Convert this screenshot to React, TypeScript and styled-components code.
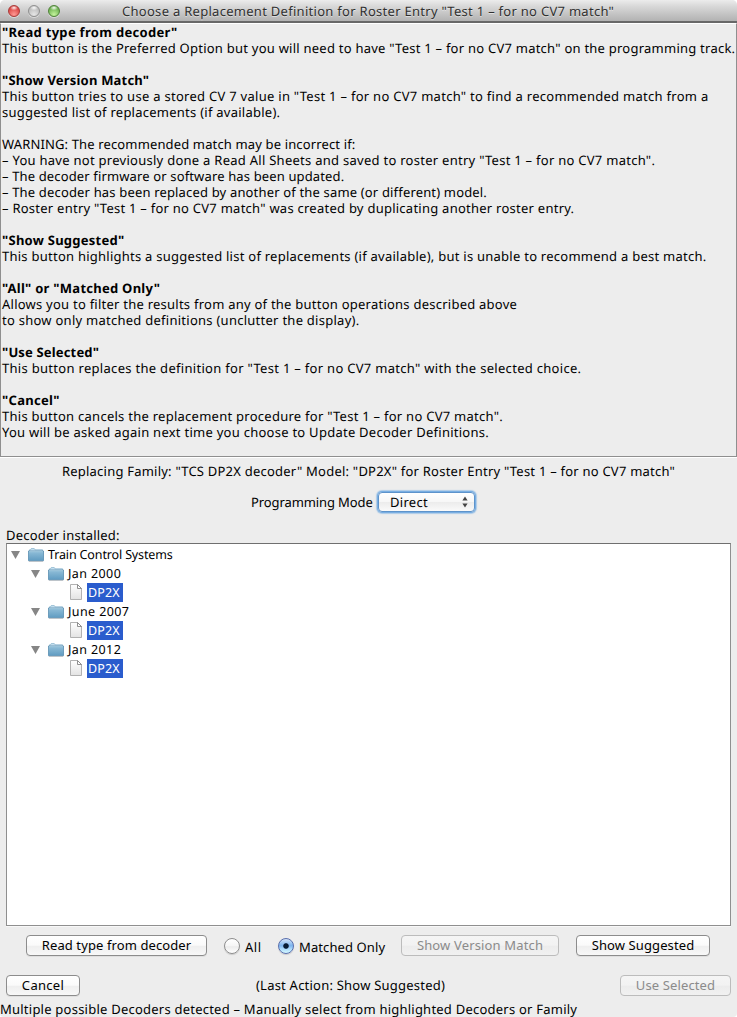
import React from 'react';
import styled, { createGlobalStyle, css } from 'styled-components';

const GlobalStyle = createGlobalStyle`
  * { box-sizing: border-box; }
  body {
    margin: 0;
    background: #fff;
    color: #000;
    font: 13px/16px "Lucida Grande", "Noto Sans", "Open Sans", sans-serif;
    text-rendering: geometricPrecision;
  }
`;

const Window = styled.main`
  width: 737px;
  height: 1017px;
  display: flex;
  flex-direction: column;
  overflow: hidden;
  background: #ededed;
  border-radius: 5px 5px 4px 4px;
`;

const TitleBar = styled.header`
  height: 23px;
  flex: none;
  display: flex;
  align-items: center;
  padding: 0 0 0 8px;
  background: linear-gradient(#ececec, #d8d8d8 30%, #b2b2b2);
  border-bottom: 2px solid #686868;
`;

const Lights = styled.div`
  display: flex;
  gap: 8px;
  width: 114px;
`;

const Light = styled.i<{ $edge: string; $dark: string; $light: string }>`
  width: 12px;
  height: 12px;
  border-radius: 50%;
  border: 1px solid ${p => p.$edge};
  background:
    radial-gradient(ellipse 4px 2.5px at 50% 18%, rgba(255, 255, 255, 0.95), rgba(255, 255, 255, 0)),
    radial-gradient(circle at 50% 85%, ${p => p.$light}, ${p => p.$dark} 75%);
  box-shadow: 0 1px 0 rgba(255, 255, 255, 0.45);
`;

const Text = styled.span<{ $track?: number; $bold?: boolean }>`
  display: block;
  white-space: pre;
  letter-spacing: ${p => p.$track ?? 0.3}px;
  font-weight: ${p => (p.$bold ? 700 : 400)};
`;

const Title = styled(Text)`
  color: #303030;
  text-shadow: 0 1px 0 rgba(255, 255, 255, 0.5);
`;

const HelpPane = styled.section`
  height: 434px;
  flex: none;
  padding: 0 0 0 1px;
  border: 1px solid #8f8f8f;
  border-top-color: #fff;
  box-shadow: 0 1px 0 #fff;
`;

const HelpLine = styled(Text)`
  height: 16px;
`;

const Summary = styled.div`
  height: 30px;
  flex: none;
  display: flex;
  justify-content: center;
  padding-top: 6px;
`;

const ModeRow = styled.div`
  height: 40px;
  flex: none;
  display: flex;
  align-items: flex-start;
  padding: 3px 0 0 251px;
`;

const ModeLabel = styled(Text)`
  width: 127px;
  padding-top: 4px;
`;

const Select = styled.div`
  width: 97px;
  height: 20px;
  margin-top: 2px;
  display: flex;
  align-items: center;
  justify-content: space-between;
  padding: 0 6px 1px 11px;
  border: 1px solid #5d93cb;
  border-radius: 4px;
  background: linear-gradient(#fff, #f7f7f7 48%, #ececec 52%, #fafafa);
  box-shadow: 0 0 0 1px #79aee2, 0 0 1px 2px rgba(130, 180, 228, 0.6);
`;

const Caption = styled.div`
  height: 16px;
  flex: none;
  padding-left: 6px;
`;

const Tree = styled.section`
  height: 383px;
  flex: none;
  margin: 0 6px;
  padding: 1px 0 0 4px;
  font-size: 12.5px;
  background: #fff;
  border: 1px solid #8f8f8f;
  border-top-color: #6f6f6f;
  box-shadow: 0 1px 0 #f8f8f8;
`;

const Row = styled.div<{ $level: number }>`
  height: 19px;
  display: flex;
  align-items: center;
  padding-left: ${p => p.$level * 20}px;
  svg { flex: none; display: block; }
`;

const Gap = styled.span`
  width: 8px;
  flex: none;
`;

const FolderLabel = styled(Text)`
  padding: 0 0 0 4px;
`;

const LeafRow = styled(Row)`
  padding-left: 59px;
  svg { margin-bottom: 2px; }
`;

const Selected = styled(Text)`
  height: 19px;
  width: 36px;
  margin-left: 5px;
  padding: 2px 0 0 1px;
  color: #fff;
  background: #2a5ccd;
`;

const ActionRow = styled.div`
  height: 40px;
  flex: none;
  display: flex;
  padding: 9px 0 0 26px;
`;

const CancelRow = styled.div`
  height: 35px;
  flex: none;
  display: flex;
  padding: 9px 6px 0;
`;

const Button = styled.button<{ $w: number; $gap?: number }>`
  width: ${p => p.$w}px;
  height: 21px;
  flex: none;
  margin: 0 0 0 ${p => p.$gap ?? 0}px;
  padding: 0 0 1px;
  display: flex;
  align-items: center;
  justify-content: center;
  font: inherit;
  color: #000;
  border: 1px solid #8c8c8c;
  border-radius: 4px;
  background: linear-gradient(#fff, #fafafa 48%, #efefef 55%, #f8f8f8);
  box-shadow: 0 1px 0 rgba(0, 0, 0, 0.06);
  ${p => p.disabled && css`
    color: #8b8b8b;
    border-color: #bcbcbc;
    background: linear-gradient(#f5f5f5, #f2f2f2 48%, #ececec 55%, #f1f1f1);
    box-shadow: none;
  `}
`;

const Radio = styled.label<{ $gap: number; $w: number }>`
  display: flex;
  align-items: flex-start;
  gap: 5px;
  width: ${p => p.$w}px;
  margin-left: ${p => p.$gap}px;
  padding-top: 3px;
`;

const RadioDot = styled.i<{ $on?: boolean }>`
  width: 16px;
  height: 16px;
  flex: none;
  border-radius: 50%;
  border: 1px solid ${p => (p.$on ? '#5a6fae' : '#8e8e8e')};
  background: ${p => p.$on
    ? 'radial-gradient(circle at 50% 50%, #081c35 2.3px, transparent 3.2px), linear-gradient(#d5e5fa, #7db4ee 48%, #a2d2fa 65%, #d6fbff)'
    : 'linear-gradient(#fff, #f6f6f6 48%, #ececec 55%, #fff)'};
  box-shadow: 0 1px 1px rgba(0, 0, 0, 0.15);
`;

const RadioText = styled(Text)`
  padding-top: 1px;
`;

const LastAction = styled(Text)`
  width: 364px;
  padding: 2px 0 0;
  margin-left: 176px;
`;

const Status = styled.footer`
  height: 16px;
  flex: none;
`;

const Triangle = () => (
  <svg width="9" height="8" viewBox="0 0 9 8"><path d="M0 0H9L4.5 8Z" fill="#868686" /></svg>
);

const Folder = () => (
  <svg width="16" height="14" viewBox="0 0 16 14">
    <defs>
      <linearGradient id="folder" x2="0" y2="1">
        <stop offset="0" stopColor="#92bfd9" />
        <stop offset="1" stopColor="#5f9bc1" />
      </linearGradient>
    </defs>
    <path d="M1.5 3.5V1.8H2.5L3.2 .6H6.3L7 1.8H14.5V3.5" fill="#c8e2f1" stroke="#8ab4cd" strokeWidth=".8" />
    <path d="M.4 3H15.6V12.2Q15.6 12.8 15 12.8H1Q.4 12.8 .4 12.2Z" fill="url(#folder)" stroke="#5389ac" strokeWidth=".8" />
    <path d="M1 3.7H15" stroke="#b3d5e8" strokeWidth=".7" />
    <path d="M.8 13.5H15.2" stroke="#999" strokeOpacity=".5" strokeWidth=".8" />
  </svg>
);

const Page = () => (
  <svg width="12" height="16" viewBox="0 0 12 16">
    <defs>
      <linearGradient id="page" x2="0" y2="1">
        <stop offset="0" stopColor="#fff" />
        <stop offset="1" stopColor="#e3e3e3" />
      </linearGradient>
    </defs>
    <path d="M.5 .5H7.5L11.5 4.5V15.5H.5Z" fill="url(#page)" stroke="#a9a9a9" strokeWidth=".9" />
    <path d="M7.5 .5V4.5H11.5Z" fill="#fff" stroke="#858585" strokeWidth=".9" />
  </svg>
);

const Arrows = () => (
  <svg width="6" height="12" viewBox="0 0 6 12">
    <path d="M3 .5L5.6 4.5H.4ZM3 11.5L5.6 7.5H.4Z" fill="#444" />
  </svg>
);

type Line = [text: string, track?: number, bold?: boolean];

const help: Line[] = [
  ['"Read type from decoder"', 0.3, true],
  ['This button is the Preferred Option but you will need to have "Test 1 – for no CV7 match" on the programming track.', 0.24],
  [''],
  ['"Show Version Match"', 0.2, true],
  ['This button tries to use a stored CV 7 value in "Test 1 – for no CV7 match" to find a recommended match from a', 0.28],
  ['suggested list of replacements (if available).', 0.25],
  [''],
  ['WARNING: The recommended match may be incorrect if:', 0.14],
  ['– You have not previously done a Read All Sheets and saved to roster entry "Test 1 – for no CV7 match".', 0.27],
  ['– The decoder firmware or software has been updated.', 0.14],
  ['– The decoder has been replaced by another of the same (or different) model.', 0.165],
  ['– Roster entry "Test 1 – for no CV7 match" was created by duplicating another roster entry.', 0.25],
  [''],
  ['"Show Suggested"', 0.25, true],
  ['This button highlights a suggested list of replacements (if available), but is unable to recommend a best match.', 0.25],
  [''],
  ['"All" or "Matched Only"', 0.26, true],
  ['Allows you to filter the results from any of the button operations described above', 0.24],
  ['to show only matched definitions (unclutter the display).', 0.26],
  [''],
  ['"Use Selected"', 0.16, true],
  ['This button replaces the definition for "Test 1 – for no CV7 match" with the selected choice.', 0.3],
  [''],
  ['"Cancel"', 0.3, true],
  ['This button cancels the replacement procedure for "Test 1 – for no CV7 match".', 0.26],
  ['You will be asked again next time you choose to Update Decoder Definitions.', 0.26],
];

const families = ['Jan 2000', 'June 2007', 'Jan 2012'];

export default function App() {
  return (
    <>
      <GlobalStyle />
      <Window>
        <TitleBar>
          <Lights>
            <Light $edge="#a83a38" $dark="#d9403e" $light="#ff9a94" />
            <Light $edge="#8f8f8f" $dark="#b9b9b9" $light="#e6e6e6" />
            <Light $edge="#4f8238" $dark="#68ad4c" $light="#c4f49c" />
          </Lights>
          <Title $track={0.285}>Choose a Replacement Definition for Roster Entry "Test 1 – for no CV7 match"</Title>
        </TitleBar>
        <HelpPane>
          {help.map(([text, track, bold], i) => (
            <HelpLine key={i} $track={track} $bold={bold}>{text}</HelpLine>
          ))}
        </HelpPane>
        <Summary>
          <Text $track={0.225}>Replacing Family: "TCS DP2X decoder" Model: "DP2X" for Roster Entry "Test 1 – for no CV7 match"</Text>
        </Summary>
        <ModeRow>
          <ModeLabel $track={-0.1}>Programming Mode</ModeLabel>
          <Select><Text>Direct</Text><Arrows /></Select>
        </ModeRow>
        <Caption><Text $track={0.2}>Decoder installed:</Text></Caption>
        <Tree>
          <Row $level={0}>
            <Triangle /><Gap /><Folder /><FolderLabel $track={-0.14}>Train Control Systems</FolderLabel>
          </Row>
          {families.map(name => (
            <React.Fragment key={name}>
              <Row $level={1}>
                <Triangle /><Gap /><Folder /><FolderLabel $track={0.4}>{name}</FolderLabel>
              </Row>
              <LeafRow $level={3}>
                <Page /><Selected $track={0.1}>DP2X</Selected>
              </LeafRow>
            </React.Fragment>
          ))}
        </Tree>
        <ActionRow>
          <Button $w={181}><Text $track={0.1}>Read type from decoder</Text></Button>
          <Radio $gap={17} $w={39}><RadioDot /><RadioText $track={0.5}>All</RadioText></Radio>
          <Radio $gap={15} $w={107}><RadioDot $on /><RadioText $track={0.1}>Matched Only</RadioText></Radio>
          <Button $w={158} $gap={16} disabled><Text $track={0.15}>Show Version Match</Text></Button>
          <Button $w={134} $gap={17}><Text $track={0.1}>Show Suggested</Text></Button>
        </ActionRow>
        <CancelRow>
          <Button $w={74}><Text>Cancel</Text></Button>
          <LastAction $track={0.22}>(Last Action: Show Suggested)</LastAction>
          <Button $w={111} disabled><Text $track={0.13}>Use Selected</Text></Button>
        </CancelRow>
        <Status><Text $track={0.23}>Multiple possible Decoders detected – Manually select from highlighted Decoders or Family</Text></Status>
      </Window>
    </>
  );
}
